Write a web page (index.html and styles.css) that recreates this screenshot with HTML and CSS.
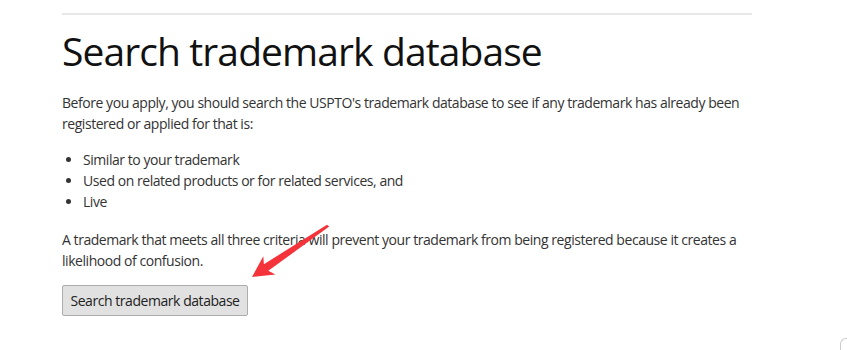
FILE: index.html
```html
<!doctype html>
<html lang="en">
<head>
    <meta charset="UTF-8">
    <title>Search trademark database</title>
    <link rel="stylesheet" href="styles.css">
</head>
<body>
<div class="page">
    <hr class="rule">
    <h1 class="title">Search trademark database</h1>
    <p class="text">Before you apply, you should search the USPTO's trademark database to see if any trademark has already been registered or applied for that is:</p>
    <ul class="list">
        <li>Similar to your trademark</li>
        <li>Used on related products or for related services, and</li>
        <li>Live</li>
    </ul>
    <p class="text">A trademark that meets all three criteria will prevent your trademark from being registered because it creates a likelihood of confusion.</p>
    <button class="btn">Search trademark database</button>
    <svg class="arrow" width="80" height="58" viewBox="0 0 80 58">
        <path d="M75 2.7 L77.2 4.6 L16.3 48.8 L23.5 52.4 L0 55 L11.3 34.2 L11.9 42.2 Z" fill="#f5333a"/>
    </svg>
</div>
<div class="corner"></div>
</body>
</html>
```

FILE: styles.css
```css
html, body {
    margin: 0;
    padding: 0;
    background: #fff;
}

body {
    font-family: "Open Sans", "Noto Sans", sans-serif;
    color: #333;
}

.page {
    width: 690px;
    margin-left: 62px;
    padding-top: 13px;
    position: relative;
}

.rule {
    border: 0;
    border-top: 2px solid #e8e8e8;
    margin: 0;
}

.title {
    font-size: 39px;
    font-weight: 400;
    color: #111;
    margin: 12px 0 0;
    line-height: 48px;
    letter-spacing: -0.9px;
}

.text {
    font-size: 14px;
    line-height: 21px;
    margin: 17px 0 0;
    letter-spacing: -0.45px;
}

.list {
    font-size: 14px;
    line-height: 21px;
    margin: 15px 0 0;
    padding-left: 21px;
    letter-spacing: -0.45px;
}

.list + .text {
    margin-top: 17px;
}

.btn {
    display: block;
    margin-top: 14px;
    width: 186px;
    height: 31px;
    font-family: inherit;
    font-size: 14px;
    letter-spacing: -0.45px;
    color: #222;
    background: #e1e1e1;
    border: 1px solid #adadad;
    border-radius: 2px;
    padding: 0;
}

.arrow {
    position: absolute;
    left: 190px;
    top: 222px;
}

.corner {
    position: fixed;
    right: 0;
    bottom: 0;
    width: 6px;
    height: 11px;
    border-left: 1px solid #ccc;
    border-top: 1px solid #ccc;
    border-top-left-radius: 6px;
}
```
